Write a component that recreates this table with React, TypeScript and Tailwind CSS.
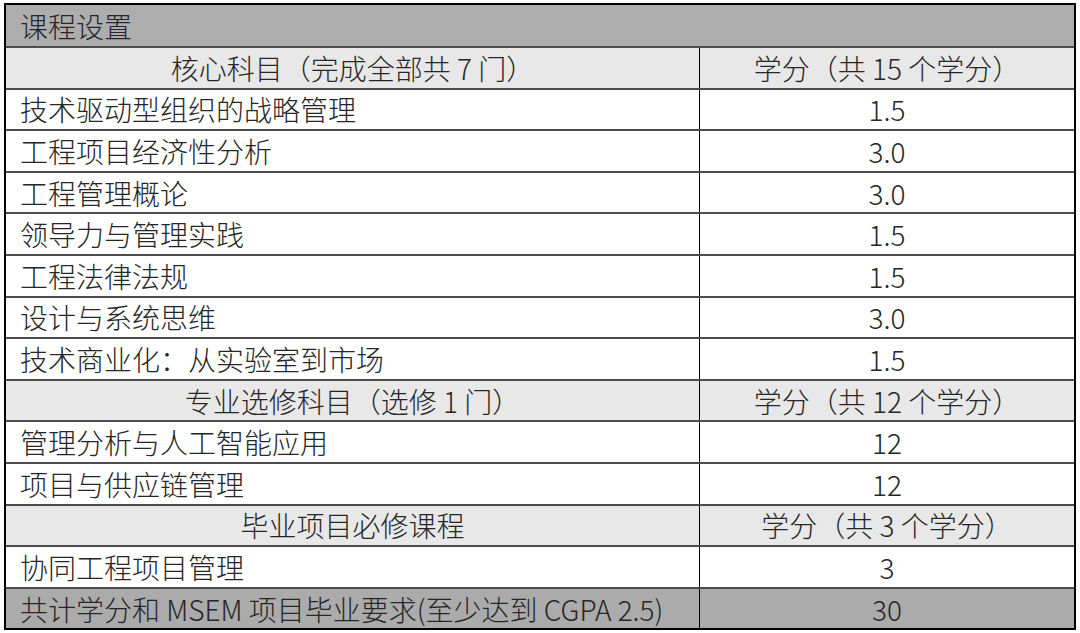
import React from "react";

type Row = {
  kind: "head" | "item" | "total";
  name: string;
  credit: string;
};

const rows: Row[] = [
  { kind: "head", name: "核心科目（完成全部共 7 门）", credit: "学分（共 15 个学分）" },
  { kind: "item", name: "技术驱动型组织的战略管理", credit: "1.5" },
  { kind: "item", name: "工程项目经济性分析", credit: "3.0" },
  { kind: "item", name: "工程管理概论", credit: "3.0" },
  { kind: "item", name: "领导力与管理实践", credit: "1.5" },
  { kind: "item", name: "工程法律法规", credit: "1.5" },
  { kind: "item", name: "设计与系统思维", credit: "3.0" },
  { kind: "item", name: "技术商业化：从实验室到市场", credit: "1.5" },
  { kind: "head", name: "专业选修科目（选修 1 门）", credit: "学分（共 12 个学分）" },
  { kind: "item", name: "管理分析与人工智能应用", credit: "12" },
  { kind: "item", name: "项目与供应链管理", credit: "12" },
  { kind: "head", name: "毕业项目必修课程", credit: "学分（共 3 个学分）" },
  { kind: "item", name: "协同工程项目管理", credit: "3" },
  { kind: "total", name: "共计学分和 MSEM 项目毕业要求(至少达到 CGPA 2.5)", credit: "30" },
];

const App: React.FC = () => {
  return (
    <div className="w-[1080px] h-[633px] bg-white pt-[3px] pl-[4px] font-['Noto_Sans_CJK_SC',sans-serif] font-light text-[28px] text-[#262626] leading-none">
      <div className="w-[1072px] border-2 border-black">
        <div className="h-[41px] flex items-center bg-[#adadad] px-[14px]">
          课程设置
        </div>
        {rows.map((row, i) => {
          const bg =
            row.kind === "head"
              ? "bg-[#e8e8e8]"
              : row.kind === "total"
              ? "bg-[#ababab]"
              : "bg-white";
          return (
            <div
              key={i}
              className={`h-[41.6px] flex border-t-2 border-[#4d4d4d] ${bg}`}
            >
              <div
                className={`w-[693px] flex items-center px-[14px] ${
                  row.kind === "head" ? "justify-center" : ""
                }`}
              >
                {row.name}
              </div>
              <div className="flex-1 flex items-center justify-center border-l-[1.5px] border-black">
                {row.credit}
              </div>
            </div>
          );
        })}
      </div>
    </div>
  );
};

export default App;
